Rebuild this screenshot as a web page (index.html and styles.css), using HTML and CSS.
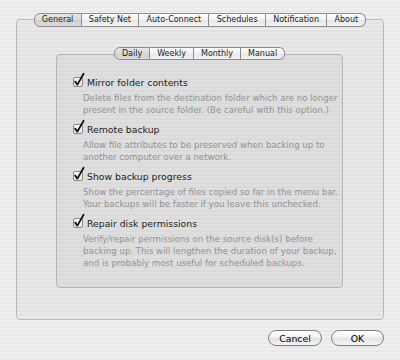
FILE: index.html
```html
<!DOCTYPE html>
<html lang="en">
<head>
    <meta charset="UTF-8">
    <title>Preferences</title>
    <link rel="stylesheet" href="styles.css">
</head>
<body>
    <div class="prefs">
        <div class="panel">
            <div class="tabs">
                <span class="tab active">General</span>
                <span class="tab">Safety Net</span>
                <span class="tab">Auto-Connect</span>
                <span class="tab">Schedules</span>
                <span class="tab">Notification</span>
                <span class="tab">About</span>
            </div>

            <div class="subpanel">
                <div class="tabs small">
                    <span class="tab active">Daily</span>
                    <span class="tab">Weekly</span>
                    <span class="tab">Monthly</span>
                    <span class="tab">Manual</span>
                </div>

                <div class="options">
                    <div class="option">
                        <div class="option-label">
                            <span class="check"><svg width="12" height="14" viewBox="0 0 12 14"><path d="M2.2 8.6 L4.4 11.6 L10.6 0.8" /></svg></span>
                            Mirror folder contents
                        </div>
                        <p class="option-desc">Delete files from the destination folder which are no longer<br>present in the source folder. (Be careful with this option.)</p>
                    </div>
                    <div class="option">
                        <div class="option-label">
                            <span class="check"><svg width="12" height="14" viewBox="0 0 12 14"><path d="M2.2 8.6 L4.4 11.6 L10.6 0.8" /></svg></span>
                            Remote backup
                        </div>
                        <p class="option-desc">Allow file attributes to be preserved when backing up to<br>another computer over a network.</p>
                    </div>
                    <div class="option">
                        <div class="option-label">
                            <span class="check"><svg width="12" height="14" viewBox="0 0 12 14"><path d="M2.2 8.6 L4.4 11.6 L10.6 0.8" /></svg></span>
                            Show backup progress
                        </div>
                        <p class="option-desc">Show the percentage of files copied so far in the menu bar.<br>Your backups will be faster if you leave this unchecked.</p>
                    </div>
                    <div class="option">
                        <div class="option-label">
                            <span class="check"><svg width="12" height="14" viewBox="0 0 12 14"><path d="M2.2 8.6 L4.4 11.6 L10.6 0.8" /></svg></span>
                            Repair disk permissions
                        </div>
                        <p class="option-desc">Verify/repair permissions on the source disk(s) before<br>backing up. This will lengthen the duration of your backup,<br>and is probably most useful for scheduled backups.</p>
                    </div>
                </div>
            </div>
        </div>

        <div class="buttons">
            <button class="button cancel">Cancel</button>
            <button class="button ok">OK</button>
        </div>
    </div>
</body>
</html>
```

FILE: styles.css
```css
body {
    margin: 0;
    width: 400px;
    height: 360px;
    font-family: "DejaVu Sans", "Lucida Grande", sans-serif;
    background-color: #ededed;
    background-image: repeating-linear-gradient(#efefef 0, #efefef 2px, #e9e9e9 2px, #e9e9e9 4px);
    overflow: hidden;
}
.prefs {
    padding: 19px 16px 0 16px;
}
.panel {
    box-sizing: border-box;
    height: 301px;
    border: 1px solid #bababa;
    border-radius: 4px;
    background: rgba(0,0,0,0.025);
}
.tabs {
    display: flex;
    justify-content: center;
    margin-top: -7px;
}
.tab {
    box-sizing: border-box;
    height: 14px;
    padding: 0 7.25px;
    border: 1px solid #8d8d8d;
    border-left: none;
    font-size: 8px;
    line-height: 12px;
    color: #1a1a1a;
    background: linear-gradient(#ffffff, #f2f2f2 50%, #e6e6e6 51%, #f3f3f3);
}
.tab:first-child {
    border-left: 1px solid #8d8d8d;
    border-radius: 6px 0 0 6px;
}
.tab:last-child {
    border-radius: 0 6px 6px 0;
}
.tab.active {
    background: linear-gradient(#e6e6e6, #dadada 50%, #cfcfcf 51%, #dcdcdc);
}
.subpanel {
    box-sizing: border-box;
    width: 287px;
    height: 234px;
    margin: 27px 0 0 39px;
    border: 1px solid #b4b4b4;
    border-radius: 4px;
    background: rgba(0,0,0,0.04);
}
.tabs.small {
    margin-top: -8px;
}
.tabs.small .tab {
    height: 13px;
    line-height: 11px;
    padding: 0 7px;
}
.options {
    padding: 15px 0 0 16px;
}
.option-label {
    display: flex;
    align-items: center;
    height: 14px;
    font-size: 9.3px;
    color: #1a1a1a;
}
.check {
    position: relative;
    box-sizing: border-box;
    width: 10px;
    height: 10px;
    margin-right: 4px;
    border: 1px solid #8a8a8a;
    border-radius: 2px;
    background: linear-gradient(#ffffff, #e4e4e4);
}
.check svg {
    position: absolute;
    left: -1px;
    top: -5px;
    overflow: visible;
}
.check path {
    fill: none;
    stroke: #111;
    stroke-width: 1.8;
    stroke-linecap: round;
    stroke-linejoin: round;
}
.option-desc {
    margin: 3px 0 6px 10px;
    font-size: 8.6px;
    line-height: 12px;
    color: #929292;
}
.buttons {
    display: flex;
    justify-content: flex-end;
    gap: 9px;
    margin-top: 10px;
}
.button {
    box-sizing: border-box;
    height: 16px;
    padding: 0;
    border: 1px solid #7f7f7f;
    border-radius: 8px;
    font-family: "DejaVu Sans", sans-serif;
    font-size: 9.3px;
    color: #000;
    background: linear-gradient(#ffffff, #f0f0f0 50%, #e2e2e2 51%, #f4f4f4);
}
.button.cancel {
    width: 54px;
}
.button.ok {
    width: 53px;
}
```
